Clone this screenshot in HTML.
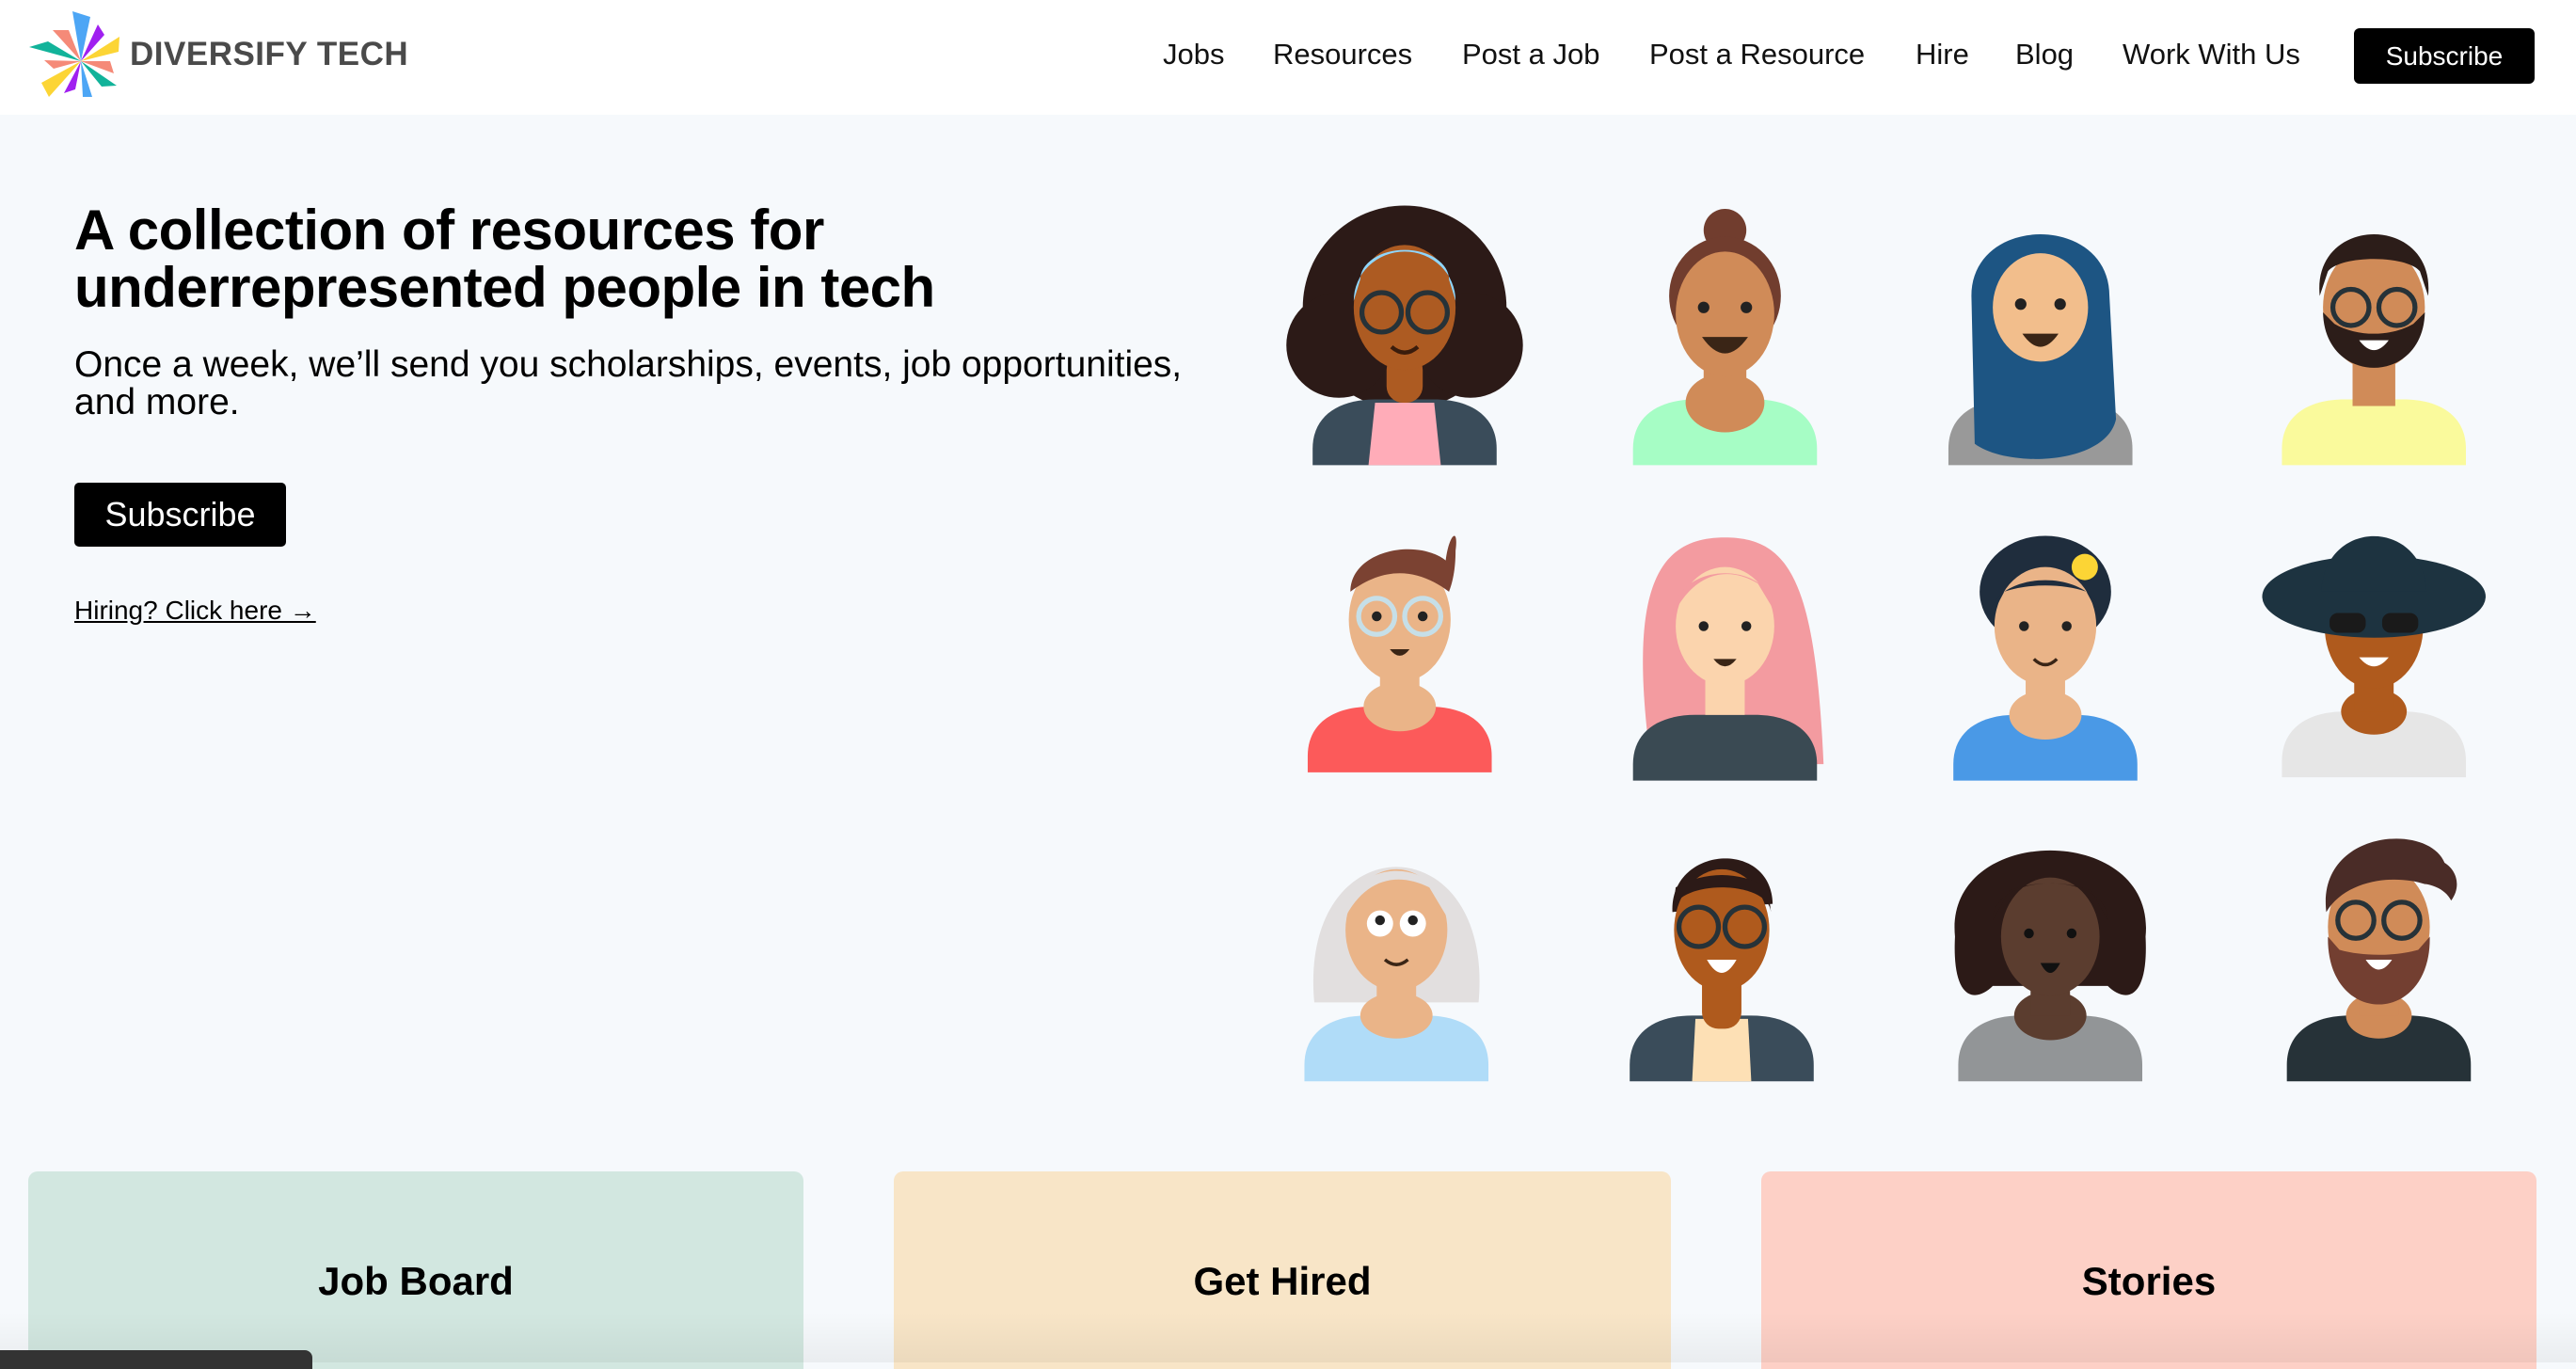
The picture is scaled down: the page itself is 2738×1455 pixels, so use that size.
<!DOCTYPE html>
<html><head><meta charset="utf-8"><style>
*{margin:0;padding:0;box-sizing:border-box}
body{width:2738px;height:1448px;overflow:hidden;background:#f6f9fc;font-family:"Liberation Sans",sans-serif;position:relative;color:#000}
header{position:absolute;left:0;top:0;width:2738px;height:122px;background:#fff}
.logo{position:absolute;left:138px;top:38px;font-size:35px;font-weight:bold;color:#4a4a4a;letter-spacing:0.5px}
nav a{position:absolute;top:40px;font-size:31px;color:#111;text-decoration:none}
.sub{position:absolute;left:2502px;top:30px;width:192px;height:59px;background:#000;color:#fff;border-radius:6px;font-size:28px;text-align:center;line-height:59px}
h1{position:absolute;left:79px;top:214px;font-size:60px;line-height:61px;font-weight:bold;letter-spacing:-0.5px}
.lead{position:absolute;left:79px;top:368px;font-size:39px;line-height:40px;width:1400px}
.btn{position:absolute;left:79px;top:513px;width:225px;height:68px;background:#000;color:#fff;border-radius:5px;font-size:36px;text-align:center;line-height:68px}
.hire{position:absolute;left:79px;top:633px;font-size:28px;text-decoration:underline;color:#000}
.card{position:absolute;top:1245px;height:210px;border-radius:10px 10px 0 0;font-size:42px;font-weight:bold;text-align:center;padding-top:93px}
.bar{position:absolute;left:0;top:1435px;width:332px;height:20px;background:#333;border-radius:0 8px 0 0}
.shade{position:absolute;left:0;top:1395px;width:2738px;height:53px;background:linear-gradient(rgba(0,0,0,0),rgba(0,0,0,0.05))}
</style></head><body>
<header>
<svg style="position:absolute;left:0;top:0" width="140" height="122" viewBox="0 0 140 122">
<polygon points="86,65 77,12 96,18" fill="#4da6f5"/>
<polygon points="86,65 104,26 111,37" fill="#a020f0"/>
<polygon points="86,65 127,39 126,55" fill="#fcd535"/>
<polygon points="86,65 117,65 121,78" fill="#f58a78"/>
<polygon points="86,65 124,91 108,92" fill="#12b39a"/>
<polygon points="86,65 98,103 88,103" fill="#4da6f5"/>
<polygon points="86,65 80,95 68,99" fill="#a020f0"/>
<polygon points="86,65 52,103 44,88" fill="#fcd535"/>
<polygon points="86,65 47,64 57,73" fill="#f58a78"/>
<polygon points="86,65 31,50 51,44" fill="#12b39a"/>
<polygon points="86,65 56,32 73,32" fill="#f58a78"/>
</svg>
<div class="logo">DIVERSIFY TECH</div>
<nav><a style="left:1236px">Jobs</a><a style="left:1353px">Resources</a><a style="left:1554px">Post a Job</a><a style="left:1753px">Post a Resource</a><a style="left:2036px">Hire</a><a style="left:2142px">Blog</a><a style="left:2256px">Work With Us</a></nav>
<div class="sub">Subscribe</div>
</header>
<h1>A collection of resources for<br>underrepresented people in tech</h1>
<div class="lead">Once a week, we’ll send you scholarships, events, job opportunities,<br>and more.</div>
<div class="btn">Subscribe</div>
<div class="hire">Hiring? Click here →</div>

<svg style="position:absolute;left:0;top:0" width="2738" height="1448" viewBox="0 0 1568 829">
<defs>
<path id="bd" d="M-56,158 L-56,148 C-56,128 -40,118 -18,118 L18,118 C40,118 56,128 56,148 L56,158 Z"/>
</defs>
<g transform="translate(855,125)">
<circle cx="0" cy="62" r="62" fill="#2c1a17"/><circle cx="-40" cy="85" r="32" fill="#2c1a17"/><circle cx="40" cy="85" r="32" fill="#2c1a17"/>
<use href="#bd" fill="#3a4c5a"/><path d="M-18,120 L18,120 L22,158 L-22,158Z" fill="#ffacb8"/>
<rect x="-11" y="90" width="22" height="30" rx="10" fill="#ad5b22"/>
<ellipse cx="0" cy="62" rx="31" ry="38" fill="#ad5b22"/>
<path d="M-31,58 A31,30 0 0 1 31,58 L27,45 A27,18 0 0 0 -27,45Z" fill="#8fd6fc"/>
<circle cx="-14" cy="65" r="12" fill="none" stroke="#263238" stroke-width="3"/><circle cx="14" cy="65" r="12" fill="none" stroke="#263238" stroke-width="3"/>
<path d="M-8,86 Q0,93 8,86" stroke="#3a1c0c" stroke-width="2.5" fill="none"/>
</g>
<g transform="translate(1050,125)">
<circle cx="0" cy="15" r="13" fill="#713d2e"/><ellipse cx="0" cy="55" rx="34" ry="36" fill="#713d2e"/>
<use href="#bd" fill="#a6fdc5"/><ellipse cx="0" cy="120" rx="24" ry="18" fill="#d08b58"/>
<rect x="-13" y="90" width="26" height="30" fill="#d08b58"/>
<ellipse cx="0" cy="66" rx="30" ry="38" fill="#d08b58"/>
<circle cx="-13" cy="62" r="3.5" fill="#222"/><circle cx="13" cy="62" r="3.5" fill="#222"/>
<path d="M-14,80 Q0,100 14,80Z" fill="#3a2516"/>
</g>
<g transform="translate(1242,125)">
<use href="#bd" fill="#999"/>
<path d="M-42,55 C-42,5 42,5 42,55 L46,130 C40,158 -20,160 -40,145Z" fill="#1d5583"/>
<ellipse cx="0" cy="62" rx="29" ry="33" fill="#f2be8c"/>
<circle cx="-12" cy="60" r="3.5" fill="#222"/><circle cx="12" cy="60" r="3.5" fill="#222"/>
<path d="M-11,78 Q0,94 11,78Z" fill="#3a2516"/>
</g>
<g transform="translate(1445,125)">
<use href="#bd" fill="#fafa9c"/>
<rect x="-13" y="90" width="26" height="32" fill="#d08b58"/>
<ellipse cx="0" cy="62" rx="31" ry="38" fill="#d08b58"/>
<path d="M-33,55 C-38,5 38,5 33,55 L28,40 C20,30 -20,30 -28,40Z" fill="#2c1d19"/>
<path d="M-31,65 C-30,110 30,110 31,65 L24,72 C10,80 -10,80 -24,72Z" fill="#2c1d19"/>
<circle cx="-14" cy="62" r="11" fill="none" stroke="#263238" stroke-width="3"/><circle cx="14" cy="62" r="11" fill="none" stroke="#263238" stroke-width="3"/>
<path d="M-9,82 Q0,94 9,82Z" fill="#fff"/>
</g>
<g transform="translate(852,315)">
<use href="#bd" fill="#fc5a5a" transform="translate(0,-3)"/><ellipse cx="0" cy="115" rx="22" ry="15" fill="#eab488"/>
<rect x="-12" y="88" width="24" height="28" fill="#eab488"/>
<ellipse cx="0" cy="62" rx="31" ry="38" fill="#eab488"/>
<path d="M-30,45 C-30,20 10,12 28,26 C30,10 36,5 34,20 C34,32 32,40 30,45 C10,30 -10,30 -30,45Z" fill="#7b4232"/>
<circle cx="-14" cy="60" r="11" fill="none" stroke="#c6dfe8" stroke-width="3"/><circle cx="14" cy="60" r="11" fill="none" stroke="#c6dfe8" stroke-width="3"/>
<circle cx="-14" cy="60" r="3" fill="#222"/><circle cx="14" cy="60" r="3" fill="#222"/>
<path d="M-6,80 Q0,88 6,80Z" fill="#3a2516"/>
</g>
<g transform="translate(1050,315)">
<path d="M-45,150 C-60,40 -40,12 0,12 C40,12 55,40 60,150 Z" fill="#f39ba0"/>
<use href="#bd" fill="#3a4a53" transform="translate(0,2)"/>
<rect x="-12" y="88" width="24" height="32" fill="#fbd4ad"/>
<ellipse cx="0" cy="66" rx="30" ry="36" fill="#fbd4ad"/>
<path d="M-32,60 C-30,25 30,25 32,60 L20,40 C0,28 -20,35 -32,60Z" fill="#f39ba0"/>
<circle cx="-13" cy="66" r="3" fill="#222"/><circle cx="13" cy="66" r="3" fill="#222"/>
<path d="M-7,86 Q0,95 7,86Z" fill="#3a2516"/>
</g>
<g transform="translate(1245,315)">
<use href="#bd" fill="#4a99e6" transform="translate(0,2)"/><ellipse cx="0" cy="120" rx="22" ry="15" fill="#eab488"/>
<rect x="-12" y="88" width="24" height="32" fill="#eab488"/>
<ellipse cx="0" cy="45" rx="40" ry="34" fill="#1f2d3d"/>
<ellipse cx="0" cy="66" rx="31" ry="36" fill="#eab488"/>
<path d="M-34,62 C-34,30 34,30 34,62 L25,45 C10,40 -10,40 -25,45Z" fill="#1f2d3d"/>
<circle cx="24" cy="30" r="8" fill="#fcd535"/>
<circle cx="-13" cy="66" r="3" fill="#222"/><circle cx="13" cy="66" r="3" fill="#222"/>
<path d="M-7,86 Q0,93 7,86" stroke="#3a2516" stroke-width="2" fill="none"/>
</g>
<g transform="translate(1445,315)">
<use href="#bd" fill="#e6e6e6"/><ellipse cx="0" cy="118" rx="20" ry="14" fill="#af5a1d"/>
<rect x="-12" y="88" width="24" height="30" fill="#af5a1d"/>
<ellipse cx="0" cy="66" rx="30" ry="38" fill="#af5a1d"/>
<ellipse cx="0" cy="48" rx="68" ry="25" fill="#1d3340"/>
<path d="M-32,45 C-30,0 30,0 32,45Z" fill="#1d3340"/>
<rect x="-27" y="58" width="22" height="12" rx="5" fill="#1a1a1a"/><rect x="5" y="58" width="22" height="12" rx="5" fill="#1a1a1a"/>
<path d="M-9,85 Q0,96 9,85Z" fill="#fff"/>
</g>
<g transform="translate(850,500)">
<path d="M-50,110 C-60,0 60,0 50,110Z" fill="#e2dfdf"/>
<use href="#bd" fill="#b0dcf8"/><ellipse cx="0" cy="118" rx="22" ry="14" fill="#eab488"/>
<rect x="-12" y="88" width="24" height="30" fill="#eab488"/>
<ellipse cx="0" cy="66" rx="31" ry="37" fill="#eab488"/>
<path d="M-32,60 C-30,20 30,20 32,60 L20,40 C0,30 -20,35 -32,60Z" fill="#e2dfdf"/>
<circle cx="-10" cy="62" r="8" fill="#fff"/><circle cx="10" cy="62" r="8" fill="#fff"/>
<circle cx="-10" cy="60" r="3" fill="#222"/><circle cx="10" cy="60" r="3" fill="#222"/>
<path d="M-7,84 Q0,90 7,84" stroke="#3a2516" stroke-width="2" fill="none"/>
</g>
<g transform="translate(1048,500)">
<use href="#bd" fill="#3a4c5a"/><path d="M-16,120 L16,120 L18,158 L-18,158Z" fill="#fde0b5"/>
<rect x="-12" y="88" width="24" height="38" rx="10" fill="#af5a1d"/>
<path d="M-30,55 C-32,15 30,10 31,50Z" fill="#2c1a17"/>
<ellipse cx="0" cy="66" rx="29" ry="37" fill="#af5a1d"/>
<path d="M-30,55 C-28,35 28,35 30,55 L28,40 C10,30 -10,30 -28,40Z" fill="#2c1a17"/>
<circle cx="-14" cy="64" r="12" fill="none" stroke="#263238" stroke-width="3"/><circle cx="14" cy="64" r="12" fill="none" stroke="#263238" stroke-width="3"/>
<path d="M-9,84 Q0,100 9,84Z" fill="#fff"/>
</g>
<g transform="translate(1248,500)">
<path d="M-58,70 C-65,0 65,0 58,70 C60,110 45,110 35,100 L-35,100 C-45,110 -60,110 -58,70Z" fill="#2c1a17"/>
<use href="#bd" fill="#929597"/><ellipse cx="0" cy="118" rx="22" ry="15" fill="#5b3d2f"/>
<rect x="-12" y="88" width="24" height="30" fill="#5b3d2f"/>
<ellipse cx="0" cy="70" rx="30" ry="36" fill="#5b3d2f"/>
<path d="M-35,60 C-35,30 35,30 35,60 L25,42 C10,36 -10,36 -25,42Z" fill="#2c1a17"/>
<circle cx="-13" cy="68" r="3" fill="#111"/><circle cx="13" cy="68" r="3" fill="#111"/>
<path d="M-6,86 Q0,98 6,86Z" fill="#111"/>
</g>
<g transform="translate(1448,500)">
<use href="#bd" fill="#263238"/><ellipse cx="0" cy="118" rx="20" ry="14" fill="#d08b58"/>
<rect x="-12" y="88" width="24" height="30" fill="#d08b58"/>
<ellipse cx="0" cy="64" rx="31" ry="38" fill="#d08b58"/>
<path d="M-32,55 C-38,5 30,0 40,25 C48,30 50,40 44,48 C40,40 30,38 28,38 C10,32 -20,35 -32,55Z" fill="#4a2c27"/>
<path d="M-31,70 C-32,125 32,125 31,70 L24,78 C10,82 -10,82 -24,78Z" fill="#733f31"/>
<circle cx="-14" cy="60" r="11" fill="none" stroke="#263238" stroke-width="3"/><circle cx="14" cy="60" r="11" fill="none" stroke="#263238" stroke-width="3"/>
<path d="M-8,84 Q0,96 8,84Z" fill="#fff"/>
</g>
</svg>

<div class="card" style="left:30px;width:824px;background:#d2e7e0">Job Board</div>
<div class="card" style="left:950px;width:826px;background:#f8e5c7">Get Hired</div>
<div class="card" style="left:1872px;width:824px;background:#fdd0c6">Stories</div>
<div class="shade"></div>
<div class="bar"></div>
</body></html>
